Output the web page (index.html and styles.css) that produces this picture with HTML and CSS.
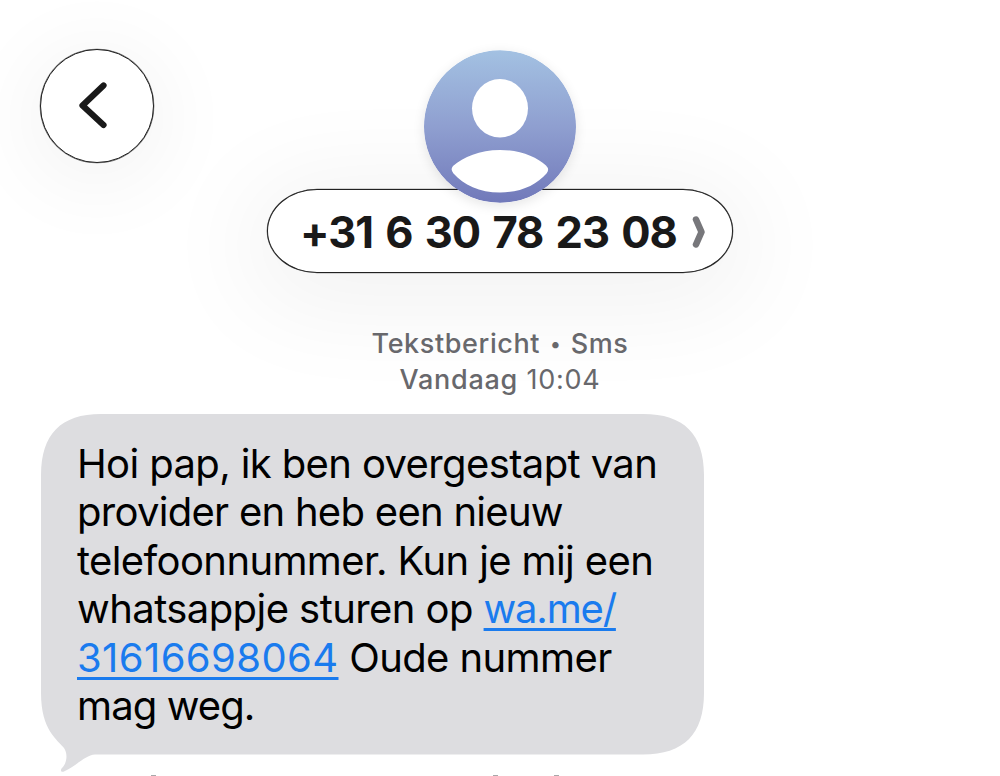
FILE: index.html
```html
<!DOCTYPE html>
<html lang="nl">
<head>
    <meta charset="UTF-8">
    <meta name="viewport" content="width=device-width, initial-scale=1.0">
    <title>Berichten</title>
    <link rel="stylesheet" href="styles.css">
</head>
<body>
    <header class="header">
        <button class="back" aria-label="Terug">
            <svg width="112" height="112" viewBox="0 0 112 112">
                <path d="M62.5 35.5 L41.5 55.5 L62.5 75" fill="none" stroke="#191919" stroke-width="6.2" stroke-linecap="round" stroke-linejoin="round"/>
            </svg>
        </button>

        <div class="contact">
            <svg class="avatar" width="152" height="153" viewBox="0.5 0 152 153">
                <defs>
                    <linearGradient id="avatarFill" x1="0" y1="0" x2="0" y2="1">
                        <stop offset="0" stop-color="#a3c1e2"/>
                        <stop offset="0.5" stop-color="#8f9fd0"/>
                        <stop offset="1" stop-color="#7179ba"/>
                    </linearGradient>
                </defs>
                <circle cx="76.5" cy="76.5" r="76.2" fill="url(#avatarFill)"/>
                <ellipse cx="76.5" cy="58.3" rx="28" ry="29.2" fill="#fff"/>
                <path d="M29.5 116 C40 107 56 100 76.5 100 C97 100 113 107 122.5 115.5 Q126.5 119.5 123 123.5 C113 135 97 142.5 76.5 142.5 C56 142.5 40 135 30 123.5 Q26.5 119.5 29.5 116 Z" fill="#fff"/>
            </svg>
            <div class="pill">
                <span class="number">+31 6 30 78 23 08</span>
                <svg class="chevron" width="14" height="32" viewBox="0 0 14 32">
                    <path d="M4 3.5 L9.5 16 L4 28.5" fill="none" stroke="#77777b" stroke-width="6.5" stroke-linecap="round" stroke-linejoin="round"/>
                </svg>
            </div>
        </div>
    </header>

    <main>
        <div class="meta">
            <div class="service">Tekstbericht <span class="dot">•</span> Sms</div>
            <div class="date"><b>Vandaag</b> 10:04</div>
        </div>

        <div class="bubble">
            <svg class="bubble-shape" width="664" height="359" viewBox="0 0 664 359">
                <path d="M60 0 H602 C643 0 663 20 663 61 V279 C663 320 643 340.5 602 340.5 H54 C44 341 34 353 23 357.5 C20 358.5 19 356 21 354 C26 349 27 340 23 334 C17 326 0 317 0 279 V61 C0 20 20 0 60 0 Z" fill="#dddde0"/>
            </svg>
            <p class="text">
                <span class="line l1">Hoi pap, ik ben overgestapt van</span>
                <span class="line l2">provider en heb een nieuw</span>
                <span class="line l3">telefoonnummer. Kun je mij een</span>
                <span class="line l4">whatsappje sturen op <a href="#">wa.me/</a></span>
                <span class="line l5"><a href="#">31616698064</a> Oude nummer</span>
                <span class="line l6">mag weg.</span>
            </p>
        </div>

        <!-- top edge of the next line, cut off by the window -->
        <svg class="next-line" width="1000" height="3" viewBox="0 0 1000 3">
            <path d="M151 2.5 H156 M493 2.5 H498 M554 2.5 H559" stroke="#a8a8aa" stroke-width="1"/>
        </svg>
    </main>
</body>
</html>
```
FILE: styles.css
```css
body {
    margin: 0;
    height: 776px;
    overflow: hidden;
    background-color: #fff;
    font-family: Inter, "Liberation Sans", sans-serif;
    color: #000;
}

.header {
    display: grid;
    grid-template-columns: 1fr auto 1fr;
    align-items: start;
    padding: 49px 40px 0;
}

.back {
    width: 114px;
    height: 114px;
    padding: 0;
    border: 1px solid #222;
    border-radius: 50%;
    background: #fff;
    box-shadow: 0 0 0 0.3px #666, 0 12px 80px 16px rgba(0, 0, 0, 0.045);
}

.back svg {
    display: block;
}

.contact {
    display: flex;
    flex-direction: column;
    align-items: center;
}

.avatar {
    position: relative;
    z-index: 1;
    margin-top: 1px;
    border-radius: 50%;
    box-shadow: 0 3px 12px rgba(0, 0, 0, 0.1);
}

.pill {
    display: flex;
    align-items: center;
    justify-content: space-between;
    box-sizing: border-box;
    width: 466px;
    height: 84px;
    margin-top: -14px;
    padding: 2px 26px 0 32px;
    border: 1px solid #222;
    border-radius: 50px / 50%;
    background: #fff;
    box-shadow: 0 0 0 0.3px #666, 0 14px 100px 24px rgba(0, 0, 0, 0.05);
}

.number {
    font-size: 43.5px;
    font-weight: 700;
    line-height: 52px;
    letter-spacing: -1px;
    word-spacing: 2.9px;
    white-space: nowrap;
    color: #191919;
}

.meta {
    margin-top: 53px;
    text-align: center;
    font-size: 27px;
    line-height: 36px;
    color: #68686c;
}

.service,
.date b {
    font-weight: 500;
}

.service {
    letter-spacing: 0.6px;
}

.dot {
    display: inline-block;
    transform: scale(0.75);
}

.date {
    letter-spacing: 0.75px;
}

.bubble {
    position: relative;
    box-sizing: border-box;
    width: 663px;
    height: 341px;
    margin: 16px 0 0 41px;
    padding: 26px 36px 24px;
}

.bubble-shape {
    position: absolute;
    top: 0;
    left: 0;
}

.text {
    position: relative;
    margin: 0;
    font-size: 40px;
    line-height: 48.4px;
}

.line {
    display: block;
    white-space: nowrap;
}

.l1 {
    letter-spacing: -0.62px;
}

.l2 {
    letter-spacing: -0.72px;
}

.l3 {
    letter-spacing: -0.61px;
}

.l4 {
    letter-spacing: -0.57px;
}

.l5 {
    letter-spacing: -0.6px;
}

.l6 {
    letter-spacing: -0.9px;
}

.text a {
    color: #1a7bee;
    text-decoration: underline;
    text-decoration-thickness: 2.5px;
    text-underline-offset: 5px;
}

.l4 a {
    letter-spacing: -1.2px;
}

.l5 a {
    letter-spacing: 0.4px;
}

.next-line {
    display: block;
    margin-top: 18px;
}
```
